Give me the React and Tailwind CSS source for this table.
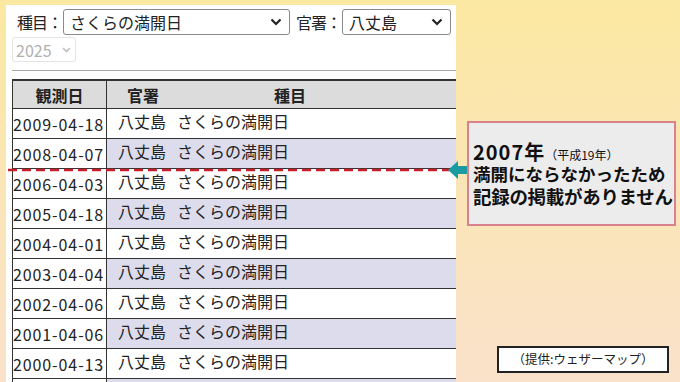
import React from 'react';

const rows = [
  '2009-04-18',
  '2008-04-07',
  '2006-04-03',
  '2005-04-18',
  '2004-04-01',
  '2003-04-04',
  '2002-04-06',
  '2001-04-06',
  '2000-04-13',
  '',
];

function Chevron({ className }) {
  return (
    <svg width="12" height="8" viewBox="0 0 12 8" className={className}>
      <path d="M1.5 1.5 L6 6 L10.5 1.5" fill="none" stroke="currentColor" strokeWidth="2.2" />
    </svg>
  );
}

function SelectBox({ value, className }) {
  return (
    <div className={`shrink-0 flex items-center justify-between h-[26px] border border-[#8a8a8a] rounded-[3px] bg-white pl-[6px] pr-[7px] ${className}`}>
      <span className="text-[16px] text-[#222] leading-none">{value}</span>
      <Chevron className="text-[#222]" />
    </div>
  );
}

export default function App() {
  return (
    <div
      className="relative w-[680px] h-[382px] overflow-hidden flex bg-gradient-to-b from-[#fbe8a1] to-[#fae2cb]"
      style={{ fontFamily: '"Noto Sans CJK JP", "Noto Sans", sans-serif' }}
    >
      <div className="shrink-0 ml-[6px] mt-[5px] w-[450px] bg-white pl-[6px] flex flex-col overflow-hidden">
        <div className="flex items-center h-[26px] mt-[4px] text-[16px] leading-none text-[#222] whitespace-nowrap">
          <span className="shrink-0 ml-[5px] w-[46px] tracking-[-1px]">種目：</span>
          <SelectBox value="さくらの満開日" className="w-[227px]" />
          <span className="shrink-0 ml-[6px] w-[46px] tracking-[-1px]">官署：</span>
          <SelectBox value="八丈島" className="w-[109px]" />
        </div>
        <div className="mt-[2px] shrink-0 flex items-center justify-between w-[64px] h-[25px] border border-[#e4e4e4] rounded-[3px] pl-[3px] pr-[4px]">
          <span className="text-[16px] text-[#b0b0b0] leading-none">2025</span>
          <Chevron className="text-[#c0c0c0] w-[9px]" />
        </div>
        <div className="shrink-0 mt-[8px] h-px bg-[#a8a8a8]" />
        <div className="shrink-0 mt-[8px] border-t-2 border-[#333] border-l border-l-[#333] w-[460px]">
          <div className="flex h-[28px] bg-[#dcdcdc] border-b border-[#333] font-bold text-[16px] leading-none text-[#222]">
            <div className="w-[94px] border-r border-[#333] flex items-center justify-center">観測日</div>
            <div className="pl-[20px] flex items-center">官署</div>
            <div className="pl-[115px] flex items-center">種目</div>
          </div>
          {rows.map((d, i) => (
            <div key={i} className="flex h-[30px] border-b border-[#333] text-[16px] leading-[24px] text-[#222]">
              <div className="w-[94px] border-r border-[#333] bg-white flex items-center tracking-[0.9px]">
                {d}
              </div>
              <div className={`flex-1 pl-[11px] ${i % 2 === 1 ? 'bg-[#dcdcec]' : 'bg-white'}`}>
                {d && (
                  <>
                    <span>八丈島</span>
                    <span className="ml-[11px]">さくらの満開日</span>
                  </>
                )}
              </div>
            </div>
          ))}
        </div>
      </div>

      <div className="flex-1 flex flex-col pl-[11px]">
        <div className="shrink-0 mt-[121px] w-[209px] h-[105px] border-2 border-[#d9828e] bg-[#ececec] pl-[4px] pt-[18px] text-[#111] font-bold leading-[23px]">
          <div className="h-[21px] leading-[21px]">
            <span className="text-[20px] tracking-[1px]">2007年</span>
            <span className="text-[12px] font-normal">（平成19年）</span>
          </div>
          <div className="text-[17.5px] whitespace-nowrap">満開にならなかったため</div>
          <div className="text-[18.5px] whitespace-nowrap -tracking-[0.3px]">記録の掲載がありません</div>
        </div>
        <div className="shrink-0 mt-[120px] ml-[30px] w-[172px] h-[27px] border-2 border-[#222] bg-white flex items-center justify-center text-[12.5px] text-[#222]">
          （提供:ウェザーマップ）
        </div>
      </div>

      <svg className="absolute left-0 top-0" width="680" height="382">
        <line x1="8" y1="170" x2="449" y2="170" stroke="#c8202a" strokeWidth="2.5" strokeDasharray="9 5" />
        <polygon points="448,170 458,161 458,166 467,166 467,174 458,174 458,179" fill="#1a9ba1" />
      </svg>
    </div>
  );
}
